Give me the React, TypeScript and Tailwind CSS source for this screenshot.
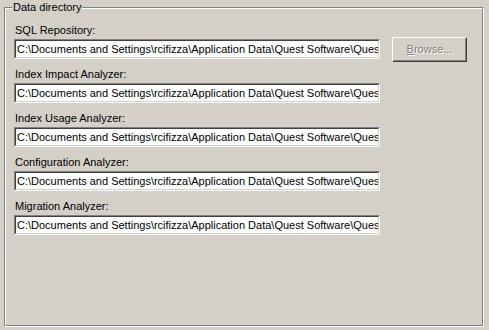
import React from "react";

const PATH =
  "C:\\Documents and Settings\\rcifizza\\Application Data\\Quest Software\\Quest Central for SQL Server\\Data";

function Field({ label, browse }: { label: string; browse?: boolean }) {
  return (
    <div className="flex flex-col">
      <div className="h-[13px] leading-[13px] pl-[1px] text-black">{label}</div>
      <div className="flex mt-[2px] h-[20px]">
        <div className="w-[366px] h-[20px] border border-t-[#808080] border-l-[#808080] border-b-white border-r-white">
          <div className="w-full h-full border border-t-[#404040] border-l-[#404040] border-b-[#d4d0c8] border-r-[#d4d0c8] bg-white overflow-hidden">
            <div className="whitespace-nowrap leading-[16px] pl-[1px] text-black">{PATH}</div>
          </div>
        </div>
        {browse && (
          <div className="ml-[12px] -mt-[2px] w-[75px] h-[25px] border border-t-white border-l-white border-b-[#404040] border-r-[#404040]">
            <div className="w-full h-full border border-t-[#d4d0c8] border-l-[#d4d0c8] border-b-[#808080] border-r-[#808080] flex items-center justify-center">
              <span className="inline-block text-[#808080] [text-shadow:1px_1px_0_#ffffff] leading-[13px] first-letter:underline">
                Browse...
              </span>
            </div>
          </div>
        )}
      </div>
    </div>
  );
}

export default function App() {
  return (
    <div
      className="w-[489px] h-[330px] bg-[#d4d0c8] pt-[7px] pl-[4px] text-[11px]"
      style={{ fontFamily: '"Liberation Sans", Arial, sans-serif' }}
    >
      <div className="relative w-[480px] h-[320px] border border-t-[#808080] border-l-[#808080] border-b-white border-r-white">
        <div className="w-full h-full border border-t-white border-l-white border-b-[#808080] border-r-[#808080] pt-[15px] pl-[8px] flex flex-col gap-[9px]">
          <Field label="SQL Repository:" browse />
          <Field label="Index Impact Analyzer:" />
          <Field label="Index Usage Analyzer:" />
          <Field label="Configuration Analyzer:" />
          <Field label="Migration Analyzer:" />
        </div>
        <div className="absolute left-[7px] -top-[7px] px-[1px] bg-[#d4d0c8] leading-[13px] text-black">
          Data directory
        </div>
      </div>
    </div>
  );
}
